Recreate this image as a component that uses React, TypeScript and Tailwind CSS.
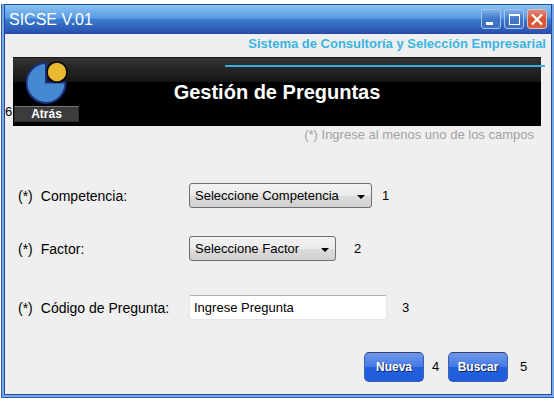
import type { ReactNode } from "react";

function TitleButton({ label, danger, children }: { label: string; danger?: boolean; children: ReactNode }) {
  return (
    <button
      type="button"
      aria-label={label}
      className={
        "flex size-5 items-center justify-center rounded-[3px] border " +
        (danger
          ? "border-[#e9b9b8] bg-linear-to-b from-[#d98a80] via-[#d9512c] to-[#d8603f]"
          : "border-[#a3c4ee] bg-linear-to-b from-[#7fb0e8] via-[#4077c8] to-[#3f6fc0]")
      }
    >
      <svg viewBox="0 0 18 18" className="size-[18px]" fill="none" aria-hidden="true">
        {children}
      </svg>
    </button>
  );
}

function TitleBar() {
  return (
    <header className="flex h-[30px] items-center justify-between border-y border-y-[#2348a8] bg-[linear-gradient(to_bottom,#8ac4f2_0%,#5a9ae4_46%,#3a7cce_52%,#2950ae_100%)] pr-1 pl-1">
      <h1 className="pt-[2px] text-base text-white">SICSE V.01</h1>
      <div className="flex gap-[3px]">
        <TitleButton label="Minimizar">
          <rect x="4" y="12" width="7" height="3" fill="#fff" />
        </TitleButton>
        <TitleButton label="Maximizar">
          <path d="M4 4h11v11H4z M5 6v8h9V6z" fill="#fff" fillRule="evenodd" />
        </TitleButton>
        <TitleButton label="Cerrar" danger>
          <path d="M4 4.500L14 14.500M14 4.500L4 14.500" stroke="#fff" strokeWidth="2.200" />
        </TitleButton>
      </div>
    </header>
  );
}

function Logo() {
  return (
    <svg viewBox="0 0 42 43" className="h-[43px] w-[42px]" aria-hidden="true">
      <path d="M20 2A19.500 20 0 1 0 39.500 21.500H20Z" fill="#4489cf" stroke="#1c2f80" strokeWidth="2" />
      <circle cx="31" cy="11" r="10" fill="#e9b932" stroke="#0c0a05" strokeWidth="1.600" />
    </svg>
  );
}

function Picker({ id, text, width }: { id: string; text: string; width: string }) {
  return (
    <div className={"relative " + width}>
      <select
        id={id}
        className="block h-[25px] w-full appearance-none rounded-[3px] border border-[#707070] bg-[linear-gradient(to_bottom,#f2f2f2_0%,#ebebeb_50%,#dddddd_51%,#cfcfcf_100%)] pl-[5px] text-[13px] text-black"
      >
        <option>{text}</option>
      </select>
      <svg viewBox="0 0 8 4" className="pointer-events-none absolute top-[12px] right-[7px] h-1 w-2" aria-hidden="true">
        <path d="M0 0H8L4 4Z" fill="#000" />
      </svg>
    </div>
  );
}

function Field({ id, label, mark, children }: { id: string; label: string; mark: string; children: ReactNode }) {
  return (
    <div className="flex items-center">
      <label htmlFor={id} className="flex w-[171px] shrink-0 gap-2 text-sm">
        <span>(*)</span>
        <span>{label}</span>
      </label>
      {children}
      <span className="text-[13px]">{mark}</span>
    </div>
  );
}

function ActionButton({ children }: { children: ReactNode }) {
  return (
    <button
      type="button"
      className="h-[30px] w-[60px] rounded-[5px] border border-[#3c62b8] border-t-[#2e3f70] bg-[linear-gradient(to_bottom,#7099ea_0%,#4679e4_48%,#2260dc_52%,#1f5cda_100%)] text-xs font-bold text-white [text-shadow:1px_1px_0_#14234f]"
    >
      {children}
    </button>
  );
}

export default function App() {
  return (
    <div className="bg-white pt-1 pb-[3px] pl-px font-['Liberation_Sans',Arial,sans-serif] text-black">
      <div className="border border-r-0 border-t-0 border-[#2f5fb8] bg-[#78aae2] pr-[2px] pb-[2px] pl-[2px]">
        <div className="border border-t-0 border-[#2348a8] bg-[#efefef]">
          <TitleBar />
          <main className="pb-3">
            <div className="relative flex h-[23px] justify-end pr-[5px]">
              <p className="text-[13px] leading-5 font-bold text-[#3bb4e3]">
                Sistema de Consultoría y Selección Empresarial
              </p>
              <div className="absolute top-[31px] right-[6px] left-[220px] h-[2px] bg-[#35b0e0]" />
            </div>
            <div className="flex">
              <span className="w-2 shrink-0 pt-[46px] text-[13px] leading-[18px]">6</span>
              <section className="mr-[10px] grid h-[69px] flex-1 grid-cols-[65px_1fr_65px] border-t border-t-[#1a1a1a] bg-[linear-gradient(to_bottom,#333333_0px,#151515_24px,#000000_24px)] px-px">
                <div className="flex flex-col items-center gap-[2px] pt-[3px]">
                  <Logo />
                  <button
                    type="button"
                    className="h-4 w-full border border-[#2d2d2d] border-t-[#777777] bg-[#3c3c3c] text-xs leading-[14px] font-bold text-white"
                  >
                    Atrás
                  </button>
                </div>
                <h2 className="pt-[22px] text-center text-xl leading-6 font-bold text-white">Gestión de Preguntas</h2>
              </section>
            </div>
            <p className="pr-[17px] text-right text-[13px] leading-[18px] text-[#a2a2a2]">
              (*) Ingrese al menos uno de los campos
            </p>
            <form className="pt-[39px] pl-[13px]" onSubmit={(e) => e.preventDefault()}>
              <div className="flex flex-col gap-7">
                <Field id="competencia" label="Competencia:" mark="1">
                  <Picker id="competencia" text="Seleccione Competencia" width="mr-[10px] w-[183px]" />
                </Field>
                <Field id="factor" label="Factor:" mark="2">
                  <Picker id="factor" text="Seleccione Factor" width="mr-[18px] w-[147px]" />
                </Field>
              </div>
              <div className="pt-[34px]">
                <Field id="codigo" label="Código de Pregunta:" mark="3">
                  <input
                    id="codigo"
                    type="text"
                    defaultValue="Ingrese Pregunta"
                    className="mr-[15px] h-[25px] w-[198px] rounded-[2px] border border-[#e2e3ea] border-t-[#abadb3] bg-white px-1 text-[13px]"
                  />
                </Field>
              </div>
              <div className="flex items-center justify-end gap-2 pt-8 pr-[23px] text-[13px]">
                <ActionButton>Nueva</ActionButton>
                <span className="w-2">4</span>
                <ActionButton>Buscar</ActionButton>
                <span className="w-3 pl-1">5</span>
              </div>
            </form>
          </main>
        </div>
      </div>
    </div>
  );
}
